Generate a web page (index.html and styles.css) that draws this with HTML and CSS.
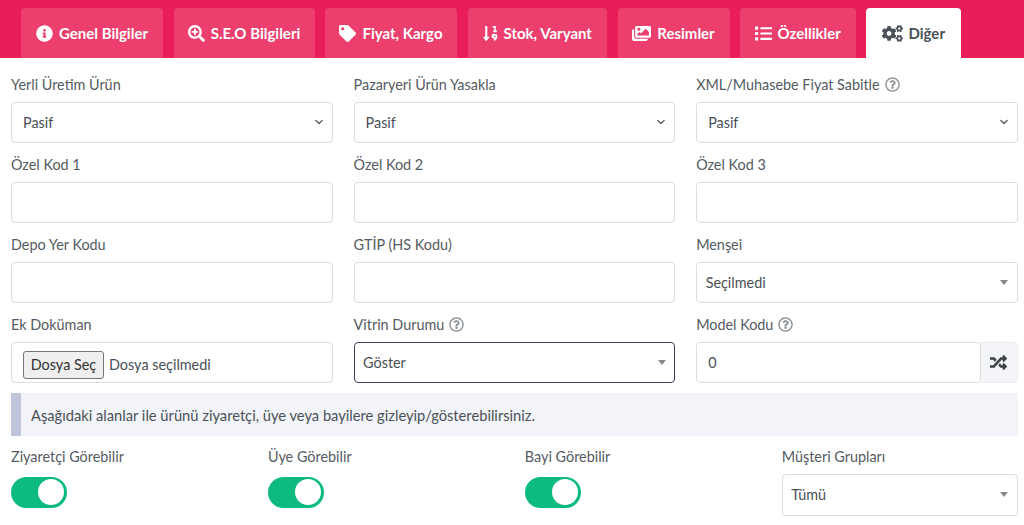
FILE: index.html
```html
<!DOCTYPE html>
<html lang="tr">
  <head>
    <meta charset="UTF-8" />
    <title>Ürün Düzenle</title>
    <link rel="stylesheet" href="styles.css">
  </head>
  <body>
    <svg class="defs" width="0" height="0" aria-hidden="true">
      <symbol id="i-info" viewBox="0 0 512 512"><path d="M256 8C119 8 8 119 8 256s111 248 248 248 248-111 248-248S393 8 256 8zm0 110c23.196 0 42 18.804 42 42s-18.804 42-42 42-42-18.804-42-42 18.804-42 42-42zm56 254c0 6.627-5.373 12-12 12h-88c-6.627 0-12-5.373-12-12v-24c0-6.627 5.373-12 12-12h12v-64h-12c-6.627 0-12-5.373-12-12v-24c0-6.627 5.373-12 12-12h64c6.627 0 12 5.373 12 12v100h12c6.627 0 12 5.373 12 12v24z"/></symbol>
      <symbol id="i-search" viewBox="0 0 512 512"><path d="M304 192v32c0 6.6-5.4 12-12 12h-56v56c0 6.6-5.4 12-12 12h-32c-6.6 0-12-5.4-12-12v-56h-56c-6.6 0-12-5.4-12-12v-32c0-6.6 5.4-12 12-12h56v-56c0-6.6 5.4-12 12-12h32c6.6 0 12 5.4 12 12v56h56c6.6 0 12 5.4 12 12zm201 284.7L476.7 505c-9.4 9.4-24.6 9.4-33.9 0L343 405.3c-4.5-4.5-7-10.6-7-17V372c-35.3 27.6-79.7 44-128 44C93.1 416 0 322.9 0 208S93.1 0 208 0s208 93.1 208 208c0 48.3-16.4 92.7-44 128h16.3c6.4 0 12.5 2.5 17 7l99.7 99.7c9.3 9.4 9.3 24.6 0 34zM344 208c0-75.2-60.8-136-136-136S72 132.8 72 208s60.8 136 136 136 136-60.8 136-136z"/></symbol>
      <symbol id="i-tag" viewBox="0 0 512 512"><path d="M0 252.118V48C0 21.49 21.49 0 48 0h204.118a48 48 0 0 1 33.941 14.059l211.882 211.882c18.745 18.745 18.745 49.137 0 67.882L293.823 497.941c-18.745 18.745-49.137 18.745-67.882 0L14.059 286.059A48 48 0 0 1 0 252.118zM112 64c-26.51 0-48 21.49-48 48s21.49 48 48 48 48-21.49 48-48-21.49-48-48-48z"/></symbol>
      <symbol id="i-sort" viewBox="0 0 448 512"><path d="M176 352h-48V48a16 16 0 0 0-16-16H80a16 16 0 0 0-16 16v304H16c-14.19 0-21.36 17.24-11.27 27.31l80 96a16 16 0 0 0 22.62 0l80-96C197.35 369.26 190.22 352 176 352z"/><path d="M288 32h96v136h32v48H304v-48h32v-88h-48z"/><path fill-rule="evenodd" d="M360 272a72 72 0 0 1 72 72c0 60-40 112-104 136v-50c18-8 34-20 44-36a72 72 0 1 1-12-122zm0 48a24 24 0 1 0 0 48 24 24 0 0 0 0-48z"/></symbol>
      <symbol id="i-images" viewBox="0 0 576 512"><path d="M480 416v16c0 26.51-21.49 48-48 48H48c-26.51 0-48-21.49-48-48V176c0-26.51 21.49-48 48-48h16v208c0 44.112 35.888 80 80 80h336zm96-80V80c0-26.51-21.49-48-48-48H144c-26.51 0-48 21.49-48 48v256c0 26.51 21.49 48 48 48h384c26.51 0 48-21.49 48-48zM256 128c0 26.51-21.49 48-48 48s-48-21.49-48-48 21.49-48 48-48 48 21.49 48 48zm-96 144l55.515-55.515c4.686-4.686 12.284-4.686 16.971 0L272 256l135.515-135.515c4.686-4.686 12.284-4.686 16.971 0L512 208v112H160v-48z"/></symbol>
      <symbol id="i-list" viewBox="0 0 512 512"><path d="M80 368H16a16 16 0 0 0-16 16v64a16 16 0 0 0 16 16h64a16 16 0 0 0 16-16v-64a16 16 0 0 0-16-16zm0-320H16A16 16 0 0 0 0 64v64a16 16 0 0 0 16 16h64a16 16 0 0 0 16-16V64a16 16 0 0 0-16-16zm0 160H16a16 16 0 0 0-16 16v64a16 16 0 0 0 16 16h64a16 16 0 0 0 16-16v-64a16 16 0 0 0-16-16zm416 176H176a16 16 0 0 0-16 16v32a16 16 0 0 0 16 16h320a16 16 0 0 0 16-16v-32a16 16 0 0 0-16-16zm0-320H176a16 16 0 0 0-16 16v32a16 16 0 0 0 16 16h320a16 16 0 0 0 16-16V80a16 16 0 0 0-16-16zm0 160H176a16 16 0 0 0-16 16v32a16 16 0 0 0 16 16h320a16 16 0 0 0 16-16v-32a16 16 0 0 0-16-16z"/></symbol>
      <symbol id="i-cogs" viewBox="0 0 640 512"><path d="M512.1 191l-8.2 14.3c-3 5.3-9.4 7.5-15.1 5.4-11.8-4.4-22.6-10.7-32.1-18.6-4.6-3.8-5.8-10.5-2.8-15.7l8.2-14.3c-6.9-8-12.3-17.3-15.9-27.4h-16.5c-6 0-11.2-4.3-12.2-10.3-2-12-2.1-24.6 0-37.1 1-6 6.2-10.4 12.2-10.4h16.5c3.6-10.1 9-19.4 15.9-27.4l-8.2-14.3c-3-5.2-1.9-11.9 2.8-15.7 9.5-7.9 20.4-14.2 32.1-18.6 5.7-2.1 12.1.1 15.1 5.4l8.2 14.3c10.5-1.9 21.2-1.9 31.7 0L552 6.3c3-5.3 9.4-7.5 15.1-5.4 11.8 4.4 22.6 10.7 32.1 18.6 4.6 3.8 5.8 10.5 2.8 15.7l-8.2 14.3c6.9 8 12.3 17.3 15.9 27.4h16.5c6 0 11.2 4.3 12.2 10.3 2 12 2.1 24.6 0 37.1-1 6-6.2 10.4-12.2 10.4h-16.5c-3.6 10.1-9 19.4-15.9 27.4l8.2 14.3c3 5.2 1.9 11.9-2.8 15.7-9.5 7.9-20.4 14.2-32.1 18.6-5.7 2.1-12.1-.1-15.1-5.4l-8.2-14.3c-10.4 1.9-21.2 1.9-31.7 0zm-10.5-58.8c38.5 29.6 82.4-14.3 52.8-52.8-38.5-29.7-82.4 14.3-52.8 52.8zM386.3 286.1l33.7 16.8c10.1 5.8 14.5 18.1 10.5 29.1-8.9 24.2-26.4 46.4-42.6 65.8-7.4 8.9-20.2 11.1-30.3 5.3l-29.1-16.8c-16 13.7-34.6 24.6-54.9 31.7v33.6c0 11.6-8.3 21.6-19.7 23.6-24.6 4.2-50.4 4.4-75.9 0-11.5-2-20-11.9-20-23.6V418c-20.3-7.2-38.9-18-54.9-31.7L74 403c-10 5.8-22.9 3.6-30.3-5.3-16.2-19.4-33.3-41.6-42.2-65.7-4-10.9.4-23.2 10.5-29.1l33.3-16.8c-3.9-20.9-3.9-42.4 0-63.4L12 205.8c-10.1-5.8-14.6-18.1-10.5-29 8.9-24.2 26-46.4 42.2-65.8 7.4-8.9 20.2-11.1 30.3-5.3l29.1 16.8c16-13.7 34.6-24.6 54.9-31.7V57.1c0-11.5 8.2-21.5 19.6-23.5 24.6-4.2 50.5-4.4 76-.1 11.5 2 20 11.9 20 23.6v33.6c20.3 7.2 38.9 18 54.9 31.7l29.1-16.8c10-5.8 22.9-3.6 30.3 5.3 16.2 19.4 33.2 41.6 42.1 65.8 4 10.9.1 23.2-10 29.1l-33.7 16.8c3.9 21 3.9 42.5 0 63.5zm-117.6 21.1c59.2-77-28.7-164.9-105.7-105.7-59.2 77 28.7 164.9 105.7 105.7zm243.4 182.7l-8.2 14.3c-3 5.3-9.4 7.5-15.1 5.4-11.8-4.4-22.6-10.7-32.1-18.6-4.6-3.8-5.8-10.5-2.8-15.7l8.2-14.3c-6.9-8-12.3-17.3-15.9-27.4h-16.5c-6 0-11.2-4.3-12.2-10.3-2-12-2.1-24.6 0-37.1 1-6 6.2-10.4 12.2-10.4h16.5c3.6-10.1 9-19.4 15.9-27.4l-8.2-14.3c-3-5.2-1.9-11.9 2.8-15.7 9.5-7.9 20.4-14.2 32.1-18.6 5.7-2.1 12.1.1 15.1 5.4l8.2 14.3c10.5-1.9 21.2-1.9 31.7 0l8.2-14.3c3-5.3 9.4-7.5 15.1-5.4 11.8 4.4 22.6 10.7 32.1 18.6 4.6 3.8 5.8 10.5 2.8 15.7l-8.2 14.3c6.9 8 12.3 17.3 15.9 27.4h16.5c6 0 11.2 4.3 12.2 10.3 2 12 2.1 24.6 0 37.1-1 6-6.2 10.4-12.2 10.4h-16.5c-3.6 10.1-9 19.4-15.9 27.4l8.2 14.3c3 5.2 1.9 11.9-2.8 15.7-9.5 7.9-20.4 14.2-32.1 18.6-5.7 2.1-12.1-.1-15.1-5.4l-8.2-14.3c-10.4 1.9-21.2 1.9-31.7 0zM501.6 431c38.5 29.6 82.4-14.3 52.8-52.8-38.5-29.6-82.4 14.3-52.8 52.8z"/></symbol>
      <symbol id="i-random" viewBox="0 0 512 512"><path d="M504.971 359.029c9.373 9.373 9.373 24.569 0 33.941l-80 79.984c-15.01 15.01-40.971 4.49-40.971-16.971V416h-58.785a12.004 12.004 0 0 1-8.773-3.812l-70.556-75.596 53.333-57.143L352 336h32v-39.981c0-21.438 25.943-31.998 40.971-16.971l80 79.981zM12 176h84l52.781 56.551 53.333-57.143-70.556-75.596A11.999 11.999 0 0 0 122.785 96H12c-6.627 0-12 5.373-12 12v56c0 6.627 5.373 12 12 12zm372 0v39.984c0 21.46 25.961 31.98 40.971 16.971l80-79.984c9.373-9.373 9.373-24.569 0-33.941l-80-79.981C409.943 24.021 384 34.582 384 56.019V96h-58.785a12.004 12.004 0 0 0-8.773 3.812L96 336H12c-6.627 0-12 5.373-12 12v56c0 6.627 5.373 12 12 12h110.785c3.326 0 6.503-1.381 8.773-3.812L352 176h32z"/></symbol>
      <symbol id="i-help" viewBox="0 0 512 512"><path d="M256 8C119.043 8 8 119.083 8 256c0 136.997 111.043 248 248 248s248-111.003 248-248C504 119.083 392.957 8 256 8zm0 448c-110.532 0-200-89.431-200-200 0-110.495 89.472-200 200-200 110.491 0 200 89.471 200 200 0 110.53-89.431 200-200 200zm107.244-255.2c0 67.052-72.421 68.084-72.421 92.863V300c0 6.627-5.373 12-12 12h-45.647c-6.627 0-12-5.373-12-12v-8.659c0-35.745 27.1-50.034 47.579-61.516 17.561-9.845 28.324-16.541 28.324-29.579 0-17.246-21.999-28.693-39.784-28.693-23.189 0-33.894 10.977-48.942 29.969-4.057 5.12-11.46 6.071-16.666 2.124l-27.824-21.098c-5.107-3.872-6.251-11.066-2.644-16.363C184.846 131.491 214.94 112 261.794 112c49.071 0 101.45 38.304 101.45 88.8zM298 368c0 23.159-18.841 42-42 42s-42-18.841-42-42 18.841-42 42-42 42 18.841 42 42z"/></symbol>
    </svg>

    <nav class="tabs">
      <a class="tab tab-1"><svg class="tab-icon"><use href="#i-info"/></svg>Genel Bilgiler</a>
      <a class="tab tab-2"><svg class="tab-icon"><use href="#i-search"/></svg>S.E.O Bilgileri</a>
      <a class="tab tab-3"><svg class="tab-icon"><use href="#i-tag"/></svg>Fiyat, Kargo</a>
      <a class="tab tab-4"><svg class="tab-icon icon-sort"><use href="#i-sort"/></svg>Stok, Varyant</a>
      <a class="tab tab-5"><svg class="tab-icon icon-images"><use href="#i-images"/></svg>Resimler</a>
      <a class="tab tab-6"><svg class="tab-icon"><use href="#i-list"/></svg>Özellikler</a>
      <a class="tab tab-7 active"><svg class="tab-icon icon-cogs"><use href="#i-cogs"/></svg>Diğer</a>
    </nav>

    <main class="content">
      <div class="form-grid">
        <div class="field">
          <label>Yerli Üretim Ürün</label>
          <select class="control chevron"><option>Pasif</option></select>
        </div>
        <div class="field">
          <label>Pazaryeri Ürün Yasakla</label>
          <select class="control chevron"><option>Pasif</option></select>
        </div>
        <div class="field">
          <label>XML/Muhasebe Fiyat Sabitle <svg class="help"><use href="#i-help"/></svg></label>
          <select class="control chevron"><option>Pasif</option></select>
        </div>

        <div class="field">
          <label>Özel Kod 1</label>
          <input class="control" type="text">
        </div>
        <div class="field">
          <label>Özel Kod 2</label>
          <input class="control" type="text">
        </div>
        <div class="field">
          <label>Özel Kod 3</label>
          <input class="control" type="text">
        </div>

        <div class="field">
          <label>Depo Yer Kodu</label>
          <input class="control" type="text">
        </div>
        <div class="field">
          <label>GTİP (HS Kodu)</label>
          <input class="control" type="text">
        </div>
        <div class="field">
          <label>Menşei</label>
          <div class="control picker"><span>Seçilmedi</span><b class="caret"></b></div>
        </div>

        <div class="field">
          <label>Ek Doküman</label>
          <div class="control file-box"><button class="file-btn" type="button">Dosya Seç</button><span>Dosya seçilmedi</span></div>
        </div>
        <div class="field">
          <label>Vitrin Durumu <svg class="help"><use href="#i-help"/></svg></label>
          <div class="control picker focused"><span>Göster</span><b class="caret"></b></div>
        </div>
        <div class="field">
          <label>Model Kodu <svg class="help"><use href="#i-help"/></svg></label>
          <div class="input-group">
            <input class="control" type="text" value="0">
            <span class="addon"><svg class="addon-icon"><use href="#i-random"/></svg></span>
          </div>
        </div>
      </div>

      <p class="note">Aşağıdaki alanlar ile ürünü ziyaretçi, üye veya bayilere gizleyip/gösterebilirsiniz.</p>

      <div class="visibility-grid">
        <div class="field">
          <label>Ziyaretçi Görebilir</label>
          <span class="switch"></span>
        </div>
        <div class="field">
          <label>Üye Görebilir</label>
          <span class="switch"></span>
        </div>
        <div class="field">
          <label>Bayi Görebilir</label>
          <span class="switch"></span>
        </div>
        <div class="field">
          <label>Müşteri Grupları</label>
          <div class="control picker"><span>Tümü</span><b class="caret"></b></div>
        </div>
      </div>
    </main>
  </body>
</html>
```

FILE: styles.css
```css
:root {
  --pink: #e91e58;
  --tab-color: #ec3f6e;
  --text-color: #495057;
  --label-color: #555b61;
  --border-color: #d9dcdf;
  --green: #0dba7f;
}

* {
  box-sizing: border-box;
}

html,
body {
  overflow: hidden;
}

body {
  margin: 0;
  height: 525px;
  background-color: #fff;
  color: var(--text-color);
  font-family: Lato, "Noto Sans", Arial, sans-serif;
  font-size: 14.4px;
}

.defs {
  position: absolute;
}

.tabs {
  display: flex;
  height: 58px;
  padding: 8px 0 0 21px;
  background-color: var(--pink);
}

.tab {
  display: flex;
  align-items: center;
  justify-content: center;
  gap: 6px;
  margin-right: 10.5px;
  border-radius: 4px 4px 0 0;
  background-color: var(--tab-color);
  color: #fff;
  font-size: 15px;
  font-weight: 700;
}

.tab-1 { width: 142px; }
.tab-2 { width: 141px; }
.tab-3 { width: 132px; }
.tab-4 { width: 139.5px; }
.tab-5 { width: 112px; }
.tab-6 { width: 115.5px; }
.tab-7 { width: 94.5px; }

.tab.active {
  background-color: #fff;
  color: var(--text-color);
}

.tab-icon {
  width: 17px;
  height: 17px;
  fill: currentColor;
}

.icon-sort {
  width: 15px;
}

.icon-images {
  width: 19px;
}

.icon-cogs {
  width: 21px;
}

.content {
  padding: 0 6.3px 0 11px;
}

.form-grid {
  display: grid;
  grid-template-columns: repeat(3, 1fr);
  column-gap: 21px;
  padding-top: 16px;
}

.visibility-grid {
  display: grid;
  grid-template-columns: repeat(4, 1fr);
  column-gap: 21px;
  padding-top: 10.5px;
}

.field {
  display: flex;
  flex-direction: column;
  height: 80px;
}

.field label {
  display: flex;
  align-items: center;
  gap: 5px;
  height: 20px;
  margin-bottom: 7.5px;
  color: var(--label-color);
  font-size: 14.4px;
}

.help {
  width: 15px;
  height: 15px;
  fill: #8d9297;
}

.control {
  display: block;
  width: 100%;
  height: 41.5px;
  padding: 0 11px;
  border: 1px solid var(--border-color);
  border-radius: 4px;
  background-color: #fff;
  color: var(--text-color);
  font-family: inherit;
  font-size: 14.4px;
  outline: none;
}

select.control {
  appearance: none;
}

.chevron {
  background-image: url("data:image/svg+xml,%3csvg xmlns='http://www.w3.org/2000/svg' viewBox='0 0 16 16'%3e%3cpath fill='none' stroke='%23666' stroke-linecap='round' stroke-linejoin='round' stroke-width='2.4' d='M3 5.5l5 5 5-5'/%3e%3c/svg%3e");
  background-repeat: no-repeat;
  background-position: right 8px center;
  background-size: 10px;
}

.picker {
  display: flex;
  align-items: center;
  justify-content: space-between;
  padding: 0 8.5px;
}

.picker.focused {
  border-color: #3d3f5c;
}

.caret {
  width: 0;
  height: 0;
  border-style: solid;
  border-width: 5px 4px 0;
  border-color: #888 transparent transparent;
}

.file-box {
  display: flex;
  align-items: center;
  gap: 5px;
  padding-top: 4.5px;
}

.file-btn {
  width: 81px;
  height: 28px;
  padding: 0;
  border: 1px solid #767676;
  border-radius: 3px;
  background-color: #efefef;
  color: #333;
  font-family: inherit;
  font-size: 14.4px;
}

.input-group {
  display: flex;
}

.input-group .control {
  flex: 1;
  min-width: 0;
}

.addon {
  display: flex;
  align-items: center;
  justify-content: center;
  width: 37px;
  height: 41.5px;
  border: 1px solid #e9ecef;
  border-left: none;
  border-radius: 0 4px 4px 0;
  background-color: #f4f5f8;
}

.addon-icon {
  width: 17px;
  height: 17px;
  fill: #3c4147;
}

.note {
  display: flex;
  align-items: center;
  height: 43px;
  margin: -1px 0 0;
  padding-left: 10px;
  border-left: 10px solid #c0c5dc;
  background-color: #f3f4f9;
  color: var(--text-color);
  font-size: 14.7px;
}

.switch {
  position: relative;
  display: block;
  width: 56px;
  height: 31px;
  margin-top: 2.5px;
  border-radius: 16px;
  background-color: var(--green);
}

.switch::after {
  content: "";
  position: absolute;
  top: 2.5px;
  right: 3px;
  width: 26px;
  height: 26px;
  border-radius: 50%;
  background-color: #fff;
}
```
